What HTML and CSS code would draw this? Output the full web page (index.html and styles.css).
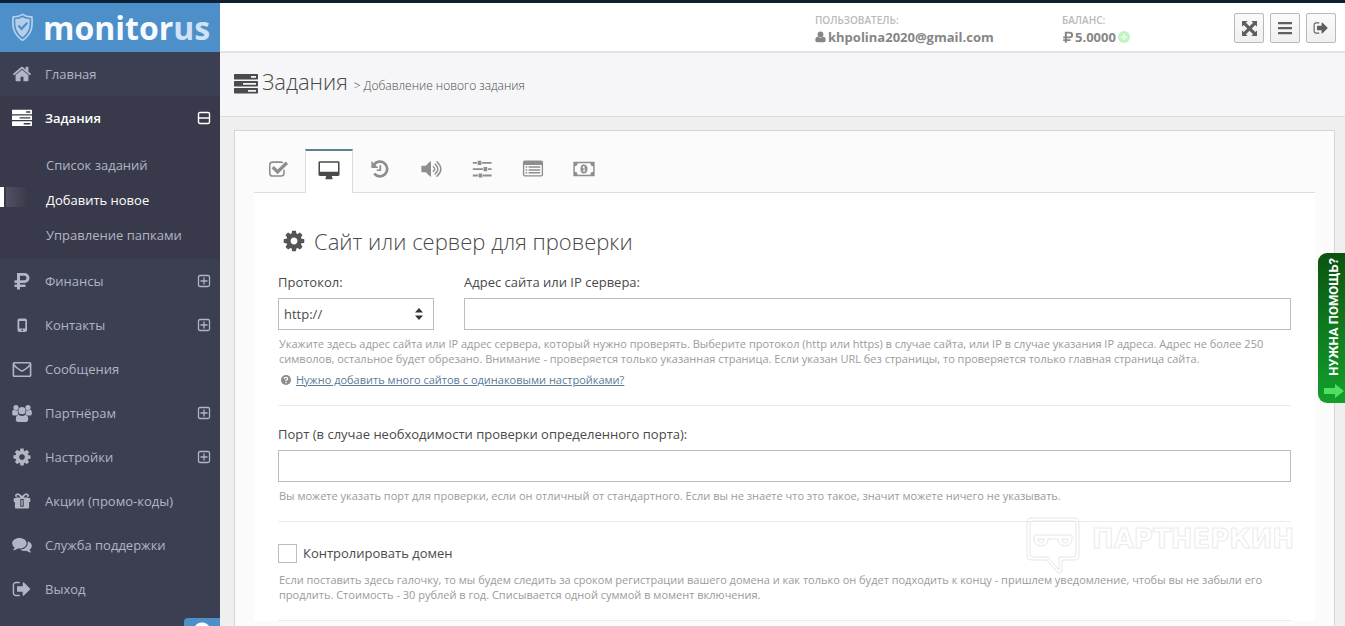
FILE: index.html
```html
<!DOCTYPE html>
<html lang="ru">
<head>
<meta charset="utf-8">
<title>monitorus — Добавление нового задания</title>
<link rel="stylesheet" href="styles.css">
</head>
<body>
<svg class="sprite" aria-hidden="true">
  <symbol id="home" viewBox="0 0 1792 1792"><path d="M1472 992v480q0 26-19 45t-45 19h-384v-384h-256v384h-384q-26 0-45-19t-19-45v-480q0-1 .5-3t.5-3l575-474 575 474q1 2 1 6zm223-69l-62 74q-8 9-21 11h-3q-13 0-21-7l-692-577-692 577q-12 8-24 7-13-2-21-11l-62-74q-8-10-7-23.5t11-21.5l719-599q32-26 76-26t76 26l244 204v-195q0-14 9-23t23-9h192q14 0 23 9t9 23v408l219 182q10 8 11 21.5t-7 23.5z"/></symbol>
  <symbol id="cog" viewBox="0 0 1792 1792"><path d="M1152 896q0-106-75-181t-181-75-181 75-75 181 75 181 181 75 181-75 75-181zm512-109v222q0 12-8 23t-20 13l-185 28q-19 54-39 91 35 50 107 138 10 12 10 25t-9 23q-27 37-99 108t-94 71q-12 0-26-9l-138-108q-44 23-91 38-16 136-29 186-7 28-36 28h-222q-14 0-24.5-8.5t-11.5-21.5l-28-184q-49-16-90-37l-141 107q-10 9-25 9-14 0-25-11-126-114-165-168-7-10-7-23 0-12 8-23 15-21 51-66.5t54-70.5q-27-50-41-99l-183-27q-13-2-21-12.5t-8-23.5v-222q0-12 8-23t19-13l186-28q14-46 39-92-40-57-107-138-10-12-10-24 0-10 9-23 26-36 98.5-107.5t94.5-71.5q13 0 26 10l138 107q44-23 91-38 16-136 29-186 7-28 36-28h222q14 0 24.5 8.5t11.5 21.5l28 184q49 16 90 37l142-107q9-9 24-9 13 0 25 10 129 119 165 170 7 8 7 22 0 12-8 23-15 21-51 66.5t-54 70.5q26 50 41 98l183 28q13 2 21 12.5t8 23.5z"/></symbol>
  <symbol id="out" viewBox="0 0 1792 1792"><path d="M704 1440q0 4 1 20t.5 26.5-3 23.5-10 19.5-20.5 6.5h-320q-119 0-203.5-84.5t-84.5-203.5v-704q0-119 84.5-203.5t203.5-84.5h320q13 0 22.5 9.5t9.5 22.5q0 4 1 20t.5 26.5-3 23.5-10 19.5-20.5 6.5h-320q-66 0-113 47t-47 113v704q0 66 47 113t113 47h312l11.5 1 11.5 3 8 5.5 7 9 2 13.5zm928-544q0 26-19 45l-544 544q-19 19-45 19t-45-19-19-45v-288h-448q-26 0-45-19t-19-45v-384q0-26 19-45t45-19h448v-288q0-26 19-45t45-19 45 19l544 544q19 19 19 45z"/></symbol>
  <symbol id="tasks" viewBox="0 0 24 20"><path fill-rule="evenodd" d="M.7 0h22.6q.7 0 .7.7v4.1q0 .7-.7.7H.7Q0 5.500 0 4.800V.7Q0 0 .7 0zM17 2v1.700h5V2zM.7 7h22.6q.7 0 .7.7v4.100q0 .7-.7.7H.7q-.7 0-.7-.7V7.700Q0 7 .7 7zM9 9v1.700h13V9zM.7 14h22.600q.7 0 .7.7v4.100q0 .7-.7.7H.7q-.7 0-.7-.7v-4.100q0-.7.7-.7zM14 16v1.700h8V16z"/></symbol>
  <symbol id="ruble" viewBox="0 0 20 20"><path fill-rule="evenodd" d="M5 2h7.500a5 5 0 0 1 0 10H8v1.500h5.500V16H8v2.500H5V16H2.500v-2.500H5V12H2.500V9.300H5zm3 2.700v4.600h4.200a2.300 2.300 0 0 0 0-4.600z"/></symbol>
  <symbol id="phone" viewBox="0 0 20 20"><path fill-rule="evenodd" d="M7.500 3.500h5.500a2 2 0 0 1 2 2v9.500a2 2 0 0 1-2 2H7.500a2 2 0 0 1-2-2V5.500a2 2 0 0 1 2-2zM7.300 6v7.500h6V6zM10.250 14.500a.8.8 0 1 0 .01 0z"/></symbol>
  <symbol id="mail" viewBox="0 0 20 20"><path fill="none" stroke="currentColor" stroke-width="1.600" stroke-linejoin="round" d="M2.200 3.800h15.600q.8 0 .8.800v11.800q0 .8-.8.800H2.200q-.8 0-.8-.8V4.600q0-.8.8-.8zM1.600 4.900Q2.500 7.500 9 11.600q1 .7 2 0 6.500-4.100 7.400-6.700"/></symbol>
  <symbol id="users" viewBox="0 0 20 20"><circle cx="4" cy="4.500" r="2.600"/><circle cx="16" cy="4.500" r="2.600"/><path d="M.2 8.700q.3-2 1.800-1.900 2 1.200 3.800.4Q5.500 10 7 11.600q-1.600.1-2.500 1H2Q.2 12.600.2 11zM19.800 8.700q-.3-2-1.800-1.900-2 1.200-3.800.4Q14.500 10 13 11.600q1.600.1 2.500 1H18q1.800 0 1.800-1.600z"/><circle cx="10" cy="7.700" r="3.600"/><path d="M3.800 16.300q0-4.300 3-4.300 3.200 2 6.400 0 3 0 3 4.300 0 2.600-2.400 2.600H6.200q-2.400 0-2.400-2.600z"/></symbol>
  <symbol id="gift" viewBox="0 0 20 20"><path fill-rule="evenodd" d="M2.300 7h3.200Q3 6.600 3 4.600 3.200 2.300 5.700 2.200 7.500 2.200 10 5q2.500-2.800 4.300-2.800 2.500.1 2.700 2.400 0 2-2.500 2.400h3.200q.6 0 .6.600v3.300h-1.200v5.500q0 1-1 1H3.900q-1 0-1-1v-5.500H1.700V7.600q0-.6.600-.6zM8.500 6.400Q6.700 4 5.800 4q-1.100.1-1.100 1.200T5.800 6.400zm3 0h2.700q1.100-.1 1.100-1.200T14.200 4q-.9 0-2.700 2.400zM8.300 8v7.800h3.400V8zm1 1h1.400v5.800H9.300z"/></symbol>
  <symbol id="chat" viewBox="0 0 20 20"><path d="M7.400 3c4 0 7.200 2.300 7.200 5.300s-3.200 5.300-7.200 5.300l-1.600-.1q-1.900 1.500-4.500 1.700l-.3-.5q1.500-.8 1.600-2.300Q.2 10.800.2 8.300C.2 5.300 3.400 3 7.400 3z"/><path d="M16 6.300q3.800 1.700 3.800 4.700 0 2-2.200 3.700.2 1.500 1.500 2.300l-.3.500q-2.500-.2-4.400-1.700-3.600.4-6.200-1.100Q15.900 14.100 16 6.300z"/></symbol>
  <symbol id="plus" viewBox="0 0 14 14"><path fill="none" stroke="currentColor" stroke-width="1.300" d="M3 1.500h8q1.500 0 1.500 1.500v8q0 1.500-1.500 1.500H3Q1.500 12.500 1.500 11V3Q1.500 1.500 3 1.500zM3.500 7h7M7 3.500v7"/></symbol>
  <symbol id="minus" viewBox="0 0 14 14"><path fill="none" stroke="currentColor" stroke-width="1.400" d="M3 1.500h8q1.500 0 1.500 1.500v8q0 1.500-1.500 1.500H3Q1.500 12.500 1.500 11V3Q1.500 1.500 3 1.500zM2 7h10"/></symbol>
  <symbol id="user" viewBox="0 0 14 14"><circle cx="7" cy="3.800" r="3.700"/><path d="M.4 11Q.5 6.900 3.600 6.800q3.400 2.200 6.800 0 3.100.1 3.200 4.200 0 2.600-2.300 2.600H2.700Q.4 13.600.4 11z"/></symbol>
  <symbol id="expand" viewBox="0 0 16 16"><path d="M0 0h6L4.200 1.800 8 5.600l3.800-3.800L10 0h6v6l-1.800-1.800L10.400 8l3.800 3.800L16 10v6h-6l1.800-1.800L8 10.400l-3.800 3.800L6 16H0v-6l1.800 1.800L5.600 8 1.800 4.200 0 6z"/></symbol>
  <symbol id="bars" viewBox="0 0 16 16"><path d="M1.500 2h13q.5 0 .5.500v1.300q0 .5-.5.500h-13q-.5 0-.5-.5V2.500q0-.5.5-.5zM1.500 7h13q.5 0 .5.500v1.300q0 .5-.5.500h-13q-.5 0-.5-.5V7.500q0-.5.5-.5zM1.500 12h13q.5 0 .5.500v1.300q0 .5-.5.500h-13q-.5 0-.5-.5v-1.300q0-.5.5-.5z"/></symbol>
  <symbol id="check" viewBox="0 0 24 24"><path fill="none" stroke="currentColor" stroke-width="1.700" stroke-linecap="round" d="M18.500 13.500v3.200q0 3-3 3H6q-3 0-3-3V7.500q0-3 3-3h9.500l1.300.3"/><path fill="none" stroke="currentColor" stroke-width="3.600" d="m6.300 10 5.200 5.200L21.700 5.200"/></symbol>
  <symbol id="desktop" viewBox="0 0 24 24"><path fill-rule="evenodd" d="M2 2.500h20q1.500 0 1.500 1.500v13q0 1.500-1.500 1.500h-7q0 1.200.8 2.200.5 1.300-.5 1.300H8.700q-1 0-.5-1.300.8-1 .8-2.200H2Q.5 18.500.5 17V4Q.5 2.500 2 2.500zM2.200 4.200V14h19.600V4.200z"/></symbol>
  <symbol id="history" viewBox="0 0 24 24"><path fill="none" stroke="currentColor" stroke-width="3" d="M5.400 7.300a8 8 0 1 1 .3 9.800"/><path d="M2.600 3.200v7.700h7.700zM11.400 8h1.900v6.300H8.500v-1.800h2.900z"/></symbol>
  <symbol id="sound" viewBox="0 0 24 24"><path d="M1.500 9.300q0-.8.800-.8h4L11 3.900q1-.8 1 .5v15.200q0 1.300-1 .5l-4.700-4.600h-4q-.8 0-.8-.8z"/><path fill="none" stroke="currentColor" stroke-width="1.600" stroke-linecap="round" d="M14.500 9.500q3.200 2.500 0 5M16.500 6.700q6 5.300 0 10.600M18.500 4q8.500 8 0 16"/></symbol>
  <symbol id="sliders" viewBox="0 0 24 24"><path d="M2 4.300h4.500v2H2zM12 4.300h10.500v2H12zM7.300 3h4v4.600h-4zM2 11.200h11v2H2zM18.500 11.200h4v2h-4zM13.700 9.900h4v4.600h-4zM2 18.100h5.500v2H2zM13 18.100h9.500v2H13zM8.300 16.800h4v4.600h-4z"/></symbol>
  <symbol id="list" viewBox="0 0 24 24"><path fill-rule="evenodd" d="M3 2.700h18q2 0 2 2v13.600q0 2-2 2H3q-2 0-2-2V4.700q0-2 2-2zM2.500 7.500v10.800q0 .6.600.6h17.800q.6 0 .6-.6V7.500zM4 9h1.700v1.600H4zm0 3.200h1.700v1.600H4zm0 3.200h1.700V17H4zM7.200 9h12.700v1.600H7.200zm0 3.200h12.700v1.600H7.200zm0 3.200h12.700V17H7.200z"/></symbol>
  <symbol id="money" viewBox="0 0 24 24"><path fill-rule="evenodd" d="M1 4h22q.6 0 .6.600v14.800q0 .6-.6.600H1q-.6 0-.6-.6V4.600Q.4 4 1 4zm4 1.700Q4.800 8.900 2 9v6q2.800.1 3 3.300h14q.2-3.200 3-3.300V9q-2.800-.1-3-3.300zM12 7.200q3.800.3 3.800 4.800T12 16.800 8.200 12 12 7.200zM10.200 10l.8 1 .6-.5v3h-1.100v1.200h3.200v-1.200h-1.100V8.800h-1.100z"/></symbol>
  <symbol id="shield" viewBox="0 0 24 30"><path fill="none" stroke="currentColor" stroke-width="1.800" stroke-linejoin="round" d="M12 1.300q4.500 3 9.800 2.500.8 9-1 14Q18.500 24 12 28.300 5.500 24 3.200 17.800 1.400 12.800 2.200 3.800 7.500 4.300 12 1.300z"/><path fill-rule="evenodd" d="M12 4.200q3.500 2 7.500 2 .3 6.300-1 10.600-1.800 4.700-6.500 8.500-4.700-3.800-6.500-8.500-1.300-4.300-1-10.600 4 0 7.500-2zM7 13.600l4 4.400 6.800-7.200-1.600-1.600-5.200 5.500-2.400-2.700z"/></symbol>
</svg>

<div class="strip"></div>
<div class="app">
  <nav class="sidebar">
    <a class="logo" href="#"><svg class="logo-icon"><use href="#shield"/></svg><span>monitor<span class="logo-tail">us</span></span></a>
    <a class="item" href="#"><svg class="ico"><use href="#home"/></svg>Главная</a>
    <div class="group">
      <a class="item current" href="#"><svg class="ico"><use href="#tasks"/></svg>Задания<svg class="toggle"><use href="#minus"/></svg></a>
      <div class="submenu">
        <a class="subitem" href="#">Список заданий</a>
        <a class="subitem active" href="#">Добавить новое</a>
        <a class="subitem" href="#">Управление папками</a>
      </div>
    </div>
    <a class="item" href="#"><svg class="ico"><use href="#ruble"/></svg>Финансы<svg class="toggle"><use href="#plus"/></svg></a>
    <a class="item" href="#"><svg class="ico"><use href="#phone"/></svg>Контакты<svg class="toggle"><use href="#plus"/></svg></a>
    <a class="item" href="#"><svg class="ico"><use href="#mail"/></svg>Сообщения</a>
    <a class="item" href="#"><svg class="ico"><use href="#users"/></svg>Партнёрам<svg class="toggle"><use href="#plus"/></svg></a>
    <a class="item" href="#"><svg class="ico"><use href="#cog"/></svg>Настройки<svg class="toggle"><use href="#plus"/></svg></a>
    <a class="item" href="#"><svg class="ico"><use href="#gift"/></svg>Акции (промо-коды)</a>
    <a class="item" href="#"><svg class="ico"><use href="#chat"/></svg>Служба поддержки</a>
    <a class="item" href="#"><svg class="ico"><use href="#out"/></svg>Выход</a>
  </nav>

  <div class="main">
    <header class="topbar">
      <div class="info user-info">
        <span class="info-label">ПОЛЬЗОВАТЕЛЬ:</span>
        <span class="info-value"><svg class="mini"><use href="#user"/></svg>khpolina2020@gmail.com</span>
      </div>
      <div class="info balance-info">
        <span class="info-label">БАЛАНС:</span>
        <span class="info-value"><svg class="mini" viewBox="2 1 14 18"><use href="#ruble" width="20" height="20"/></svg>5.0000<svg class="add" viewBox="0 0 12 12"><circle cx="6" cy="6" r="6" fill="#c3f2c3"/><path d="M6 3v6M3 6h6" stroke="#e9fce9" stroke-width="2"/></svg></span>
      </div>
      <div class="buttons">
        <button class="tool" type="button" aria-label="На весь экран"><svg><use href="#expand"/></svg></button>
        <button class="tool" type="button" aria-label="Меню"><svg class="wide"><use href="#bars"/></svg></button>
        <button class="tool" type="button" aria-label="Выйти"><svg class="wide"><use href="#out"/></svg></button>
      </div>
    </header>

    <div class="titlebar">
      <svg class="title-icon"><use href="#tasks"/></svg>
      <h1 class="title">Задания <span class="subtitle">&gt; Добавление нового задания</span></h1>
    </div>

    <main class="content">
      <div class="card">
        <div class="tabs">
          <button class="tab" type="button" aria-label="Общие"><svg><use href="#check"/></svg></button>
          <button class="tab tab-active" type="button" aria-label="Сайт"><svg><use href="#desktop"/></svg></button>
          <button class="tab" type="button" aria-label="Период"><svg><use href="#history"/></svg></button>
          <button class="tab" type="button" aria-label="Уведомления"><svg><use href="#sound"/></svg></button>
          <button class="tab" type="button" aria-label="Параметры"><svg><use href="#sliders"/></svg></button>
          <button class="tab" type="button" aria-label="Список"><svg><use href="#list"/></svg></button>
          <button class="tab" type="button" aria-label="Оплата"><svg><use href="#money"/></svg></button>
        </div>
        <form class="pane">
          <h2 class="heading"><svg class="heading-icon"><use href="#cog"/></svg>Сайт или сервер для проверки</h2>
          <section class="section">
            <div class="row">
              <div class="field protocol">
                <label for="protocol">Протокол:</label>
                <div class="select-wrap">
                  <select id="protocol" class="control"><option>http://</option><option>https://</option></select>
                  <svg class="arrows" viewBox="0 0 8 12"><path d="M4 0l4 4.500H0zM4 12l4-4.500H0z"/></svg>
                </div>
              </div>
              <div class="field address">
                <label for="address">Адрес сайта или IP сервера:</label>
                <input id="address" class="control" type="text">
              </div>
            </div>
            <p class="hint">Укажите здесь адрес сайта или IP адрес сервера, который нужно проверять. Выберите протокол (http или https) в случае сайта, или IP в случае указания IP адреса. Адрес не более 250 символов, остальное будет обрезано. Внимание - проверяется только указанная страница. Если указан URL без страницы, то проверяется только главная страница сайта.</p>
            <p class="more"><svg class="question" viewBox="0 0 10 10"><circle cx="5" cy="5" r="5" fill="#8c8c8c"/><path d="M3.300 4Q3.400 2.400 5 2.400T6.700 3.900Q6.600 4.700 5 5.500v.8M5 7v1.200" fill="none" stroke="#fff" stroke-width="1.300"/></svg><a href="#">Нужно добавить много сайтов с одинаковыми настройками?</a></p>
          </section>
          <section class="section">
            <div class="field">
              <label for="port">Порт (в случае необходимости проверки определенного порта):</label>
              <input id="port" class="control" type="text">
            </div>
            <p class="hint">Вы можете указать порт для проверки, если он отличный от стандартного. Если вы не знаете что это такое, значит можете ничего не указывать.</p>
          </section>
          <section class="section">
            <div class="check-row">
              <input id="domain" class="checkbox" type="checkbox">
              <label for="domain">Контролировать домен</label>
            </div>
            <p class="hint">Если поставить здесь галочку, то мы будем следить за сроком регистрации вашего домена и как только он будет подходить к концу - пришлем уведомление, чтобы вы не забыли его продлить. Стоимость - 30 рублей в год. Списывается одной суммой в момент включения.</p>
          </section>
        </form>
      </div>
    </main>
  </div>
</div>

<div class="watermark">
  <svg class="watermark-icon" viewBox="0 0 54 58"><path d="M6 1h42q5 0 5 5v32q0 5-5 5H36v11q-1 4-5 1L21 43H6q-5 0-5-5V6q0-5 5-5z"/><path d="M7 4h40q3 0 3 3v30q0 3-3 3H33v13L22 40H7q-3 0-3-3V7q0-3 3-3zM8 18h38v6q-2 5-7 5t-7-5v-2H22v2q-2 5-7 5t-7-5zM12 22h6q0 4-3 4t-3-4zM36 22h6q0 4-3 4t-3-4z"/></svg>
  <span>ПАРТНЕРКИН</span>
</div>
<button class="help" type="button"><span>НУЖНА ПОМОЩЬ?</span><svg class="help-arrow" viewBox="0 0 20 14"><path d="M0 4h11V0l9 7-9 7v-4H0z" fill="#4fe062"/></svg></button>
<button class="collapse" type="button" aria-label="Свернуть меню"></button>
</body>
</html>
```
FILE: styles.css
```css
* { box-sizing: border-box; }

body {
  margin: 0;
  font: 13px/20px "Open Sans", "Noto Sans", sans-serif;
  color: #4a4a4a;
  background: #efefef;
  overflow: hidden;
}

svg { fill: currentColor; flex: none; }
a { color: inherit; text-decoration: none; }
h1, h2, p { margin: 0; }
button { font: inherit; padding: 0; cursor: pointer; }
.sprite { display: none; }

.strip { height: 3px; background: #0c2036; }
.app { display: flex; min-height: calc(100vh - 3px); }

/* Sidebar */
.sidebar { flex: 0 0 220px; background: #3b3f51; color: #b1b5c4; }
.logo {
  display: flex;
  align-items: center;
  gap: 9px;
  height: 49px;
  padding-left: 11px;
  background: #4d90c9;
  color: #f7fbff;
  font-size: 32px;
  font-weight: 700;
}
.logo-icon { width: 23px; height: 29px; color: #b5cfea; }
.logo-tail { color: #cfe2f7; }
.item {
  display: flex;
  align-items: center;
  height: 44px;
  padding: 0 9px 0 12px;
}
.ico { width: 20px; height: 20px; margin-right: 13px; }
.toggle { width: 14px; height: 14px; margin-left: auto; }
.group { background: #383a4b; }
.current { color: #fff; font-weight: 600; }
.submenu { padding: 7px 0; }
.subitem {
  display: flex;
  align-items: center;
  height: 35px;
  padding-left: 46px;
}
.active {
  color: #fff;
  background:
    linear-gradient(#fff, #fff) 0 5px / 4px 20px no-repeat,
    linear-gradient(90deg, #505161, #383a4b) 6px 5px / 22px 20px no-repeat;
}

/* Top bar */
.main { flex: 1; min-width: 0; }
.topbar {
  display: flex;
  justify-content: flex-end;
  align-items: center;
  height: 50px;
  padding-right: 9px;
  background: #fff;
  border-bottom: 2px solid #e3e3e5;
}
.info { display: flex; flex-direction: column; padding-top: 6px; }
.user-info { width: 247px; }
.balance-info { width: 172px; }
.info-label { font-size: 10px; line-height: 14px; font-weight: 600; color: #b9b9b9; }
.info-value {
  display: flex;
  align-items: center;
  gap: 2px;
  font-weight: 700;
  color: #868686;
}
.mini { width: 11px; height: 12px; }
.add { width: 12px; height: 12px; }
.buttons { display: flex; gap: 6px; padding-top: 2px; }
.tool {
  display: flex;
  align-items: center;
  justify-content: center;
  width: 30px;
  height: 30px;
  color: #5f5f5f;
  background: linear-gradient(#fafafa, #f0f0f0);
  border: 1px solid #b9b9b9;
  border-radius: 2px;
}
.tool svg { width: 15px; height: 15px; }
.tool .wide { width: 16px; height: 16px; }

/* Title bar */
.titlebar {
  display: flex;
  align-items: center;
  gap: 4px;
  height: 64px;
  padding: 0 14px 2px;
  background: #f6f6f8;
  border-bottom: 1px solid #dcdce2;
}
.title-icon { width: 24px; height: 20px; color: #4a4a4f; }
.title { font-size: 22px; line-height: 32px; font-weight: 300; }
.subtitle { font-size: 12px; }

/* Card */
.content { padding: 13px 10px 14px 14px; }
.card { padding: 18px 19px; background: #fbfbfb; border: 1px solid #d6d6d6; }
.tabs { display: flex; gap: 3px; border-bottom: 1px solid #ddd; }
.tab {
  display: flex;
  align-items: center;
  justify-content: center;
  width: 48px;
  height: 43px;
  padding-bottom: 3px;
  color: #8e8e8e;
  background: none;
  border: 0;
}
.tab svg { width: 24px; height: 22px; }
.tab-active {
  height: 44px;
  margin-bottom: -1px;
  padding-bottom: 5px;
  color: #4a4a4a;
  background: #fff;
  border: 1px solid #ddd;
  border-top: 2px solid #60808f;
  border-bottom: 0;
}

/* Form */
.pane { padding: 23px 24px 0; background: #fff; }
.heading {
  display: flex;
  align-items: center;
  gap: 8px;
  padding-left: 4px;
  margin-bottom: 6px;
  font-size: 22px;
  line-height: 50px;
  font-weight: 300;
}
.heading-icon { width: 24px; height: 24px; color: #555; }
.section { padding-bottom: 18px; margin-bottom: 18px; border-bottom: 1px solid #ebebeb; }
.row { display: flex; gap: 30px; }
.field { display: flex; flex-direction: column; gap: 6px; }
.protocol { flex: 0 0 156px; }
.address { flex: 1; }
.select-wrap { display: grid; align-items: center; position: relative; }
.control {
  width: 100%;
  height: 32px;
  padding: 0 5px;
  font: inherit;
  color: inherit;
  background: #fff;
  border: 1px solid #bdbdbd;
  border-radius: 0;
  appearance: none;
}
.arrows { position: absolute; right: 11px; width: 8px; height: 12px; color: #333; pointer-events: none; }
.hint { margin-top: 6px; padding-left: 1px; font-size: 11px; line-height: 15px; color: #9b9b9b; }
.more {
  display: flex;
  align-items: center;
  gap: 5px;
  margin-top: 6px;
  padding-left: 3px;
  font-size: 11px;
  line-height: 15px;
}
.more a { color: #5b7a99; text-decoration: underline; }
.question { width: 10px; height: 10px; }
.check-row { display: flex; align-items: center; gap: 6px; padding: 3px 0; }
.checkbox {
  width: 19px;
  height: 19px;
  margin: 0;
  background: #fff;
  border: 1px solid #bdbdbd;
  appearance: none;
}

/* Overlays */
.watermark {
  position: absolute;
  right: 51px;
  top: 517px;
  display: flex;
  gap: 12px;
  font: 700 26px/44px "DejaVu Sans", sans-serif;
  color: #fff;
  -webkit-text-stroke: 1px #ebebeb;
  pointer-events: none;
}
.watermark-icon { width: 54px; height: 58px; fill: none; stroke: #e6e6e6; }
.help {
  position: fixed;
  right: 0;
  top: 253px;
  display: flex;
  flex-direction: column;
  align-items: center;
  justify-content: space-between;
  width: 27px;
  height: 150px;
  padding: 5px 0 5px 5px;
  color: #fff;
  font: 700 13px/20px Roboto, sans-serif;
  background: linear-gradient(#0b5310, #12a02c);
  border: 0;
  border-radius: 9px 0 0 9px;
}
.help span { writing-mode: vertical-rl; transform: rotate(180deg); white-space: nowrap; }
.help-arrow { width: 20px; height: 14px; }
.collapse {
  position: fixed;
  left: 184px;
  bottom: 0;
  width: 36px;
  height: 8px;
  background: radial-gradient(circle at 18px 13px, #fff 8px, #4d90c9 9px);
  border: 0;
  border-radius: 4px 0 0 0;
}
```
